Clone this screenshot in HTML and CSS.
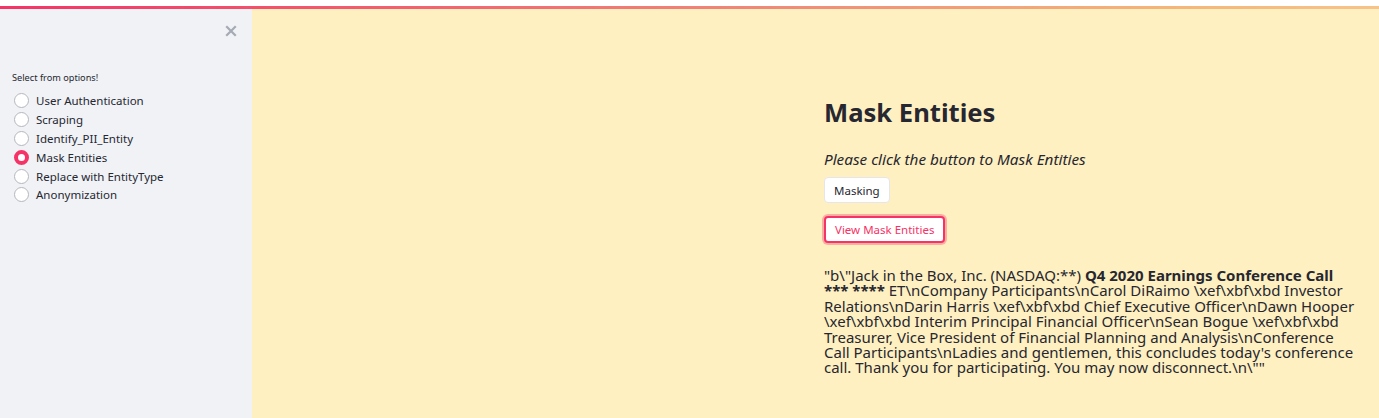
FILE: index.html
```html
<!DOCTYPE html>
<html>
<head>
<meta charset="utf-8">
<link rel="stylesheet" href="styles.css">
</head>
<body>
<div class="topstrip"></div>
<div class="decoration"></div>
<div class="app">
  <aside class="sidebar">
    <div class="close-row">
      <svg class="close" width="12" height="12" viewBox="0 0 12 12"><path d="M2 2 L10 10 M10 2 L2 10" stroke="#a6aab5" stroke-width="2.2" stroke-linecap="square"/></svg>
    </div>
    <div class="radio-label">Select from options!</div>
    <div class="radio-group">
      <div class="radio"><span class="dot"></span><span class="opt">User Authentication</span></div>
      <div class="radio"><span class="dot"></span><span class="opt">Scraping</span></div>
      <div class="radio"><span class="dot"></span><span class="opt">Identify_PII_Entity</span></div>
      <div class="radio selected"><span class="dot"></span><span class="opt">Mask Entities</span></div>
      <div class="radio"><span class="dot"></span><span class="opt">Replace with EntityType</span></div>
      <div class="radio"><span class="dot"></span><span class="opt">Anonymization</span></div>
    </div>
  </aside>
  <main class="main">
    <div class="block">
      <h2 class="title">Mask Entities</h2>
      <p class="note">Please click the button to Mask Entities</p>
      <button class="btn">Masking</button>
      <button class="btn btn-focus">View Mask Entities</button>
      <p class="output">"b\"Jack in the Box, Inc. (NASDAQ:**) <b>Q4 2020 Earnings Conference Call</b><br><b>*** ****</b> ET\nCompany Participants\nCarol DiRaimo \xef\xbf\xbd Investor<br>Relations\nDarin Harris \xef\xbf\xbd Chief Executive Officer\nDawn Hooper<br>\xef\xbf\xbd Interim Principal Financial Officer\nSean Bogue \xef\xbf\xbd<br>Treasurer, Vice President of Financial Planning and Analysis\nConference<br>Call Participants\nLadies and gentlemen, this concludes today's conference<br>call. Thank you for participating. You may now disconnect.\n\""</p>
    </div>
  </main>
</div>
</body>
</html>
```
FILE: styles.css
```css
html, body {
  margin: 0;
  padding: 0;
  height: 418px;
  overflow: hidden;
  background: #fff;
  font-family: "Noto Sans", "Open Sans", sans-serif;
  color: #262730;
}
.topstrip {
  height: 6px;
  background: #fff;
}
.decoration {
  height: 3px;
  background: linear-gradient(90deg, #f63366 0%, #f0887a 55%, #f5b57a 85%, #f7c38a 100%);
}
.app {
  display: flex;
  height: 409px;
}
.sidebar {
  width: 252px;
  flex: none;
  background: #f0f2f6;
  padding: 0 0 0 12px;
  box-sizing: border-box;
}
.close-row {
  display: flex;
  justify-content: flex-end;
  padding: 16px 15px 0 0;
  height: 14px;
}
.radio-label {
  margin-top: 32px;
  font-size: 9.2px;
  color: #262730;
  line-height: 14px;
}
.radio-group {
  margin-top: 6px;
  display: flex;
  flex-direction: column;
}
.radio {
  display: flex;
  align-items: center;
  height: 18.9px;
}
.dot {
  width: 15px;
  height: 15px;
  border-radius: 50%;
  border: 1.5px solid #b5b7be;
  background: #fff;
  box-sizing: border-box;
  margin-left: 2px;
  margin-right: 7px;
  flex: none;
}
.selected .dot {
  border: 4.5px solid #f63366;
  background: #fff;
}
.opt {
  font-size: 11.5px;
  color: #262730;
}
.main {
  flex: 1;
  background: #fff0c1;
  padding-left: 572px;
}
.block {
  width: 540px;
  padding-top: 86px;
}
.title {
  margin: 0;
  font-size: 25.6px;
  font-weight: 700;
  line-height: 36px;
  color: #262730;
}
.note {
  margin: 18px 0 0 0;
  font-style: italic;
  font-size: 15.3px;
  line-height: 20px;
}
.btn {
  display: block;
  font-family: inherit;
  font-size: 11.5px;
  color: #262730;
  background: #fff;
  border: 1px solid #e6e6ea;
  border-radius: 4px;
  height: 26px;
  padding: 0 9px;
  margin-top: 8px;
}
.btn-focus {
  margin-top: 13px;
  color: #f63366;
  border: 2px solid #f63366;
  box-shadow: 0 0 0 2px rgba(246, 51, 102, 0.35);
  height: 27px;
  padding: 0 9px;
}
.output {
  margin: 25px 0 0 0;
  font-size: 15px;
  line-height: 15.4px;
  white-space: nowrap;
}
.output b {
  font-weight: 700;
}
```
